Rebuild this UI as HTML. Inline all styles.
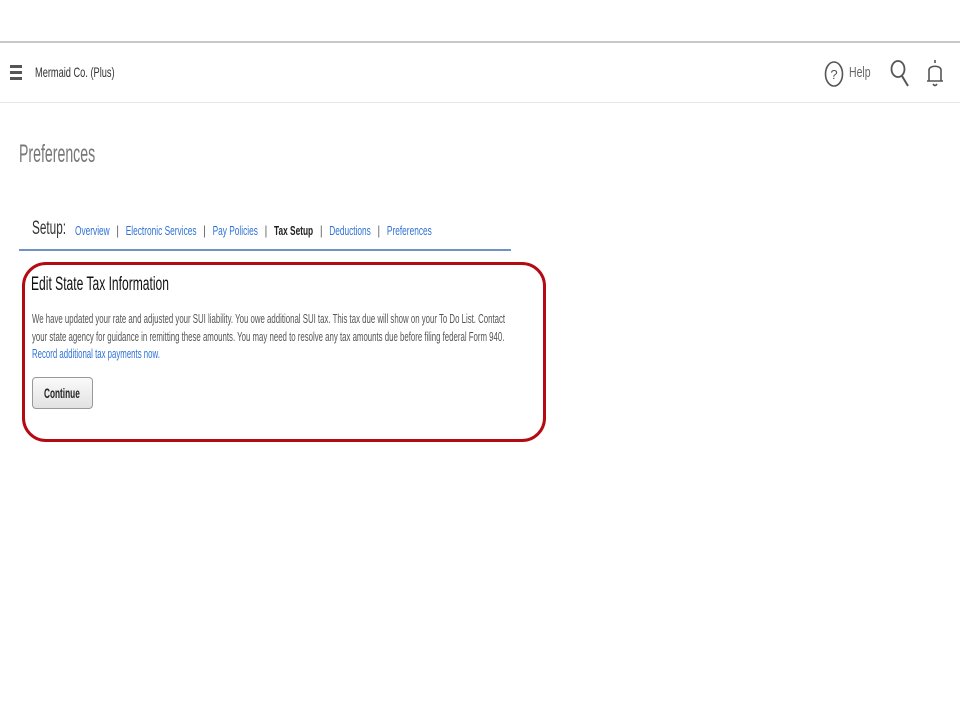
<!DOCTYPE html>
<html><head><meta charset="utf-8"><style>
*{margin:0;padding:0;box-sizing:border-box}
body{width:960px;height:720px;background:#fff;position:relative;overflow:hidden;font-family:"Liberation Sans",Arial,sans-serif}
.t{position:absolute;white-space:nowrap;transform-origin:0 0;display:block}
.blue{color:#2f72d6}
</style></head><body>
<div style="position:absolute;left:0;top:41px;width:960px;height:2px;background:#c8c8c8"></div>
<div style="position:absolute;left:0;top:102px;width:960px;height:1px;background:#e4e8ee"></div>
<div style="position:absolute;left:10px;top:65px;width:12px;height:2.5px;background:#555"></div>
<div style="position:absolute;left:10px;top:71px;width:12px;height:2.5px;background:#555"></div>
<div style="position:absolute;left:10px;top:77px;width:12px;height:2.5px;background:#555"></div>
<span class="t" style="left:35px;top:64px;font-size:14px;color:#333;transform:scaleX(0.66)">Mermaid Co. (Plus)</span>
<svg style="position:absolute;left:824px;top:60px" width="20" height="28" viewBox="0 0 20 28"><ellipse cx="10" cy="14" rx="8.5" ry="12" fill="none" stroke="#555" stroke-width="1.6"/><text x="10" y="19" text-anchor="middle" font-family="Liberation Sans" font-size="13" fill="#555">?</text></svg>
<span class="t" style="left:849px;top:64px;font-size:15px;color:#666;transform:scaleX(0.7)">Help</span>
<svg style="position:absolute;left:889px;top:58px" width="22" height="30" viewBox="0 0 22 30"><ellipse cx="9" cy="11" rx="6.5" ry="8" fill="none" stroke="#555" stroke-width="1.8"/><path d="M13 18 L19 28" stroke="#555" stroke-width="2"/></svg>
<svg style="position:absolute;left:925px;top:57px" width="20" height="32" viewBox="0 0 20 32"><path d="M10 3 V6 M4 24 V13 C4 8 16 8 16 13 V24 M2 24 H18 M8 27 Q10 30 12 27" fill="none" stroke="#555" stroke-width="1.6"/></svg>
<span class="t" style="left:19px;top:140px;font-size:25px;color:#777;transform:scaleX(0.565)">Preferences</span>
<span class="t" style="left:32px;top:218px;font-size:19px;color:#333;transform:scaleX(0.62)">Setup:</span>
<span class="t" style="left:75px;top:224px;font-size:12.5px;transform:scaleX(0.666);color:#333"><span class="blue">Overview</span> &nbsp;&nbsp;| &nbsp;&nbsp;<span class="blue">Electronic Services</span> &nbsp;&nbsp;| &nbsp;&nbsp;<span class="blue">Pay Policies</span> &nbsp;&nbsp;| &nbsp;&nbsp;<b style="color:#222">Tax Setup</b> &nbsp;&nbsp;| &nbsp;&nbsp;<span class="blue">Deductions</span> &nbsp;&nbsp;| &nbsp;&nbsp;<span class="blue">Preferences</span></span>
<div style="position:absolute;left:19px;top:249px;width:492px;height:2px;background:#6f94c4"></div>
<div style="position:absolute;left:22px;top:262px;width:524px;height:180px;border:3px solid #b40b12;border-radius:24px"></div>
<span class="t" style="left:31px;top:274px;font-size:19px;color:#111;transform:scaleX(0.635)">Edit State Tax Information</span>
<span class="t" style="left:32px;top:311px;font-size:12.5px;color:#555;line-height:17.5px;transform:scaleX(0.626)">We have updated your rate and adjusted your SUI liability. You owe additional SUI tax. This tax due will show on your To Do List. Contact<br>your state agency for guidance in remitting these amounts. You may need to resolve any tax amounts due before filing federal Form 940.<br><span class="blue">Record additional tax payments now.</span></span>
<div style="position:absolute;left:32px;top:377px;width:61px;height:32px;border:1px solid #999;border-radius:4px;background:linear-gradient(#fafafa,#e2e2e2)"></div>
<span class="t" style="left:44px;top:385px;font-size:14px;font-weight:bold;color:#222;transform:scaleX(0.59)">Continue</span>
</body></html>
